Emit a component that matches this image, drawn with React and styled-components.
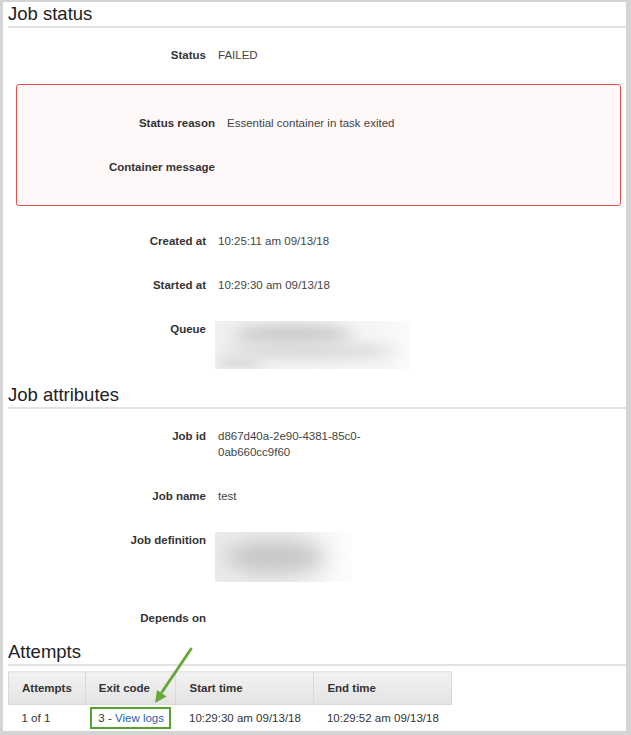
import React from 'react';
import styled, { createGlobalStyle } from 'styled-components';

const GlobalStyle = createGlobalStyle`
  html, body {
    margin: 0;
    padding: 0;
    background: #fff;
  }
  body {
    font-family: "Liberation Sans", Helvetica, Arial, sans-serif;
  }
`;

export const Moldura = styled.div`
  width: 631px;
  height: 735px;
  box-sizing: border-box;
  border-style: solid;
  border-color: #d5d5d5;
  border-width: 2px 5px 4px 3px;
  padding-left: 5px;
  overflow: hidden;
  background: #fff;
`;

export const Titulo = styled.h2`
  margin: 0;
  font-size: 18.5px;
  font-weight: normal;
  line-height: 24px;
  color: #222;
  border-bottom: 2px solid #e2e2e2;
`;

export const ListaCampos = styled.div`
  padding-top: 5px;
`;

export const Campo = styled.div`
  display: grid;
  grid-template-columns: 198px 1fr;
  column-gap: 12px;
  padding: 14px 0;
  font-size: 11.5px;
  line-height: 16px;
`;

export const Rotulo = styled.div`
  font-weight: bold;
  text-align: right;
  color: #333;
`;

export const Valor = styled.div`
  color: #444;
`;

export const CaixaErro = styled.div`
  margin: 7px 5px 13px 8px;
  padding: 16px 0;
  border: 1px solid #e0504c;
  border-radius: 3px;
  background: #fff8f8;
`;

export const Borrado = styled.div`
  width: ${p => p.$w}px;
  height: ${p => p.$h}px;
  margin-left: -3px;
  display: flex;
  flex-direction: column;
  gap: 2px;
  padding-top: ${p => p.$pt || 4}px;
  box-sizing: border-box;
  overflow: hidden;
  background: ${p => p.$bg};
`;

export const Mancha = styled.div`
  width: ${p => p.$w}px;
  height: ${p => p.$h}px;
  margin-left: ${p => p.$ml}px;
  background: ${p => p.$c};
  border-radius: 50%;
  filter: blur(${p => p.$blur || 7}px);
  flex-shrink: 0;
`;

export const Secao = styled.div`
  position: relative;
`;

export const Tabela = styled.table`
  margin-top: 5px;
  width: 443px;
  border-collapse: collapse;
  font-size: 11.5px;
  color: #333;
`;

export const Cabecalho = styled.th`
  width: ${p => p.$w}px;
  height: 33px;
  padding: 0 13px;
  text-align: left;
  font-weight: bold;
  color: #333;
  background: linear-gradient(#f2f2f2, #e3e3e3);
  border: 1px solid #d9d9d9;
  border-top-color: #e6e6e6;
  box-sizing: border-box;
`;

export const Celula = styled.td`
  height: 26px;
  padding: 0 ${p => p.$pr || 13}px 0 ${p => p.$pl || 13}px;
  white-space: nowrap;
`;

export const CodigoSaida = styled.span`
  display: inline-block;
  border: 2px solid #5aa02e;
  padding: 2px 5px 2px 6px;
  line-height: 14px;
`;

export const Link = styled.a`
  color: #1f5fae;
  text-decoration: none;
`;

export const Seta = styled.svg`
  position: absolute;
  left: 140px;
  top: 5px;
  overflow: visible;
`;

const campos = (lista) =>
  lista.map(([rotulo, valor]) => (
    <Campo key={rotulo}>
      <Rotulo>{rotulo}</Rotulo>
      <Valor>{valor}</Valor>
    </Campo>
  ));

const App = () => {
  return (
    <>
      <GlobalStyle />
      <Moldura>
        <Titulo>Job status</Titulo>
        <ListaCampos>
          {campos([['Status', 'FAILED']])}
          <CaixaErro>
            {campos([
              ['Status reason', 'Essential container in task exited'],
              ['Container message', ''],
            ])}
          </CaixaErro>
          {campos([
            ['Created at', '10:25:11 am 09/13/18'],
            ['Started at', '10:29:30 am 09/13/18'],
          ])}
          <Campo>
            <Rotulo>Queue</Rotulo>
            <Borrado $w={196} $h={48} $bg="linear-gradient(to right, #f0f0f0, #f5f5f5 80%, #fbfbfb)">
              <Mancha $w={120} $h={18} $ml={18} $c="#c8c8c8" />
              <Mancha $w={175} $h={12} $ml={8} $c="#d2d2d2" />
              <Mancha $w={45} $h={9} $ml={2} $c="#d6d6d6" $blur={5} />
            </Borrado>
          </Campo>
        </ListaCampos>

        <Titulo>Job attributes</Titulo>
        <ListaCampos>
          <Campo>
            <Rotulo>Job id</Rotulo>
            <Valor>
              d867d40a-2e90-4381-85c0-
              <br />
              0ab660cc9f60
            </Valor>
          </Campo>
          {campos([['Job name', 'test']])}
          <Campo>
            <Rotulo>Job definition</Rotulo>
            <Borrado $w={137} $h={50} $pt={8} $bg="linear-gradient(to right, #ebebeb, #f1f1f1 60%, #fdfdfd)">
              <Mancha $w={100} $h={34} $ml={10} $c="#c6c6c6" $blur={10} />
            </Borrado>
          </Campo>
          {campos([['Depends on', '']])}
        </ListaCampos>

        <Secao>
          <Titulo>Attempts</Titulo>
          <Tabela>
            <thead>
              <tr>
                <Cabecalho $w={76}>Attempts</Cabecalho>
                <Cabecalho $w={90}>Exit code</Cabecalho>
                <Cabecalho $w={139}>Start time</Cabecalho>
                <Cabecalho $w={138}>End time</Cabecalho>
              </tr>
            </thead>
            <tbody>
              <tr>
                <Celula>1 of 1</Celula>
                <Celula $pl={5} $pr={5}>
                  <CodigoSaida>
                    3 - <Link href="#">View logs</Link>
                  </CodigoSaida>
                </Celula>
                <Celula>10:29:30 am 09/13/18</Celula>
                <Celula>10:29:52 am 09/13/18</Celula>
              </tr>
            </tbody>
          </Tabela>
          <Seta width="55" height="65" viewBox="0 0 55 65">
            <line x1="43" y1="4" x2="14" y2="47" stroke="#68a93a" strokeWidth="3" strokeLinecap="round" />
            <polygon points="7,58 18.5,51.5 9,45" fill="#68a93a" />
          </Seta>
        </Secao>
      </Moldura>
    </>
  );
};

export default App;
